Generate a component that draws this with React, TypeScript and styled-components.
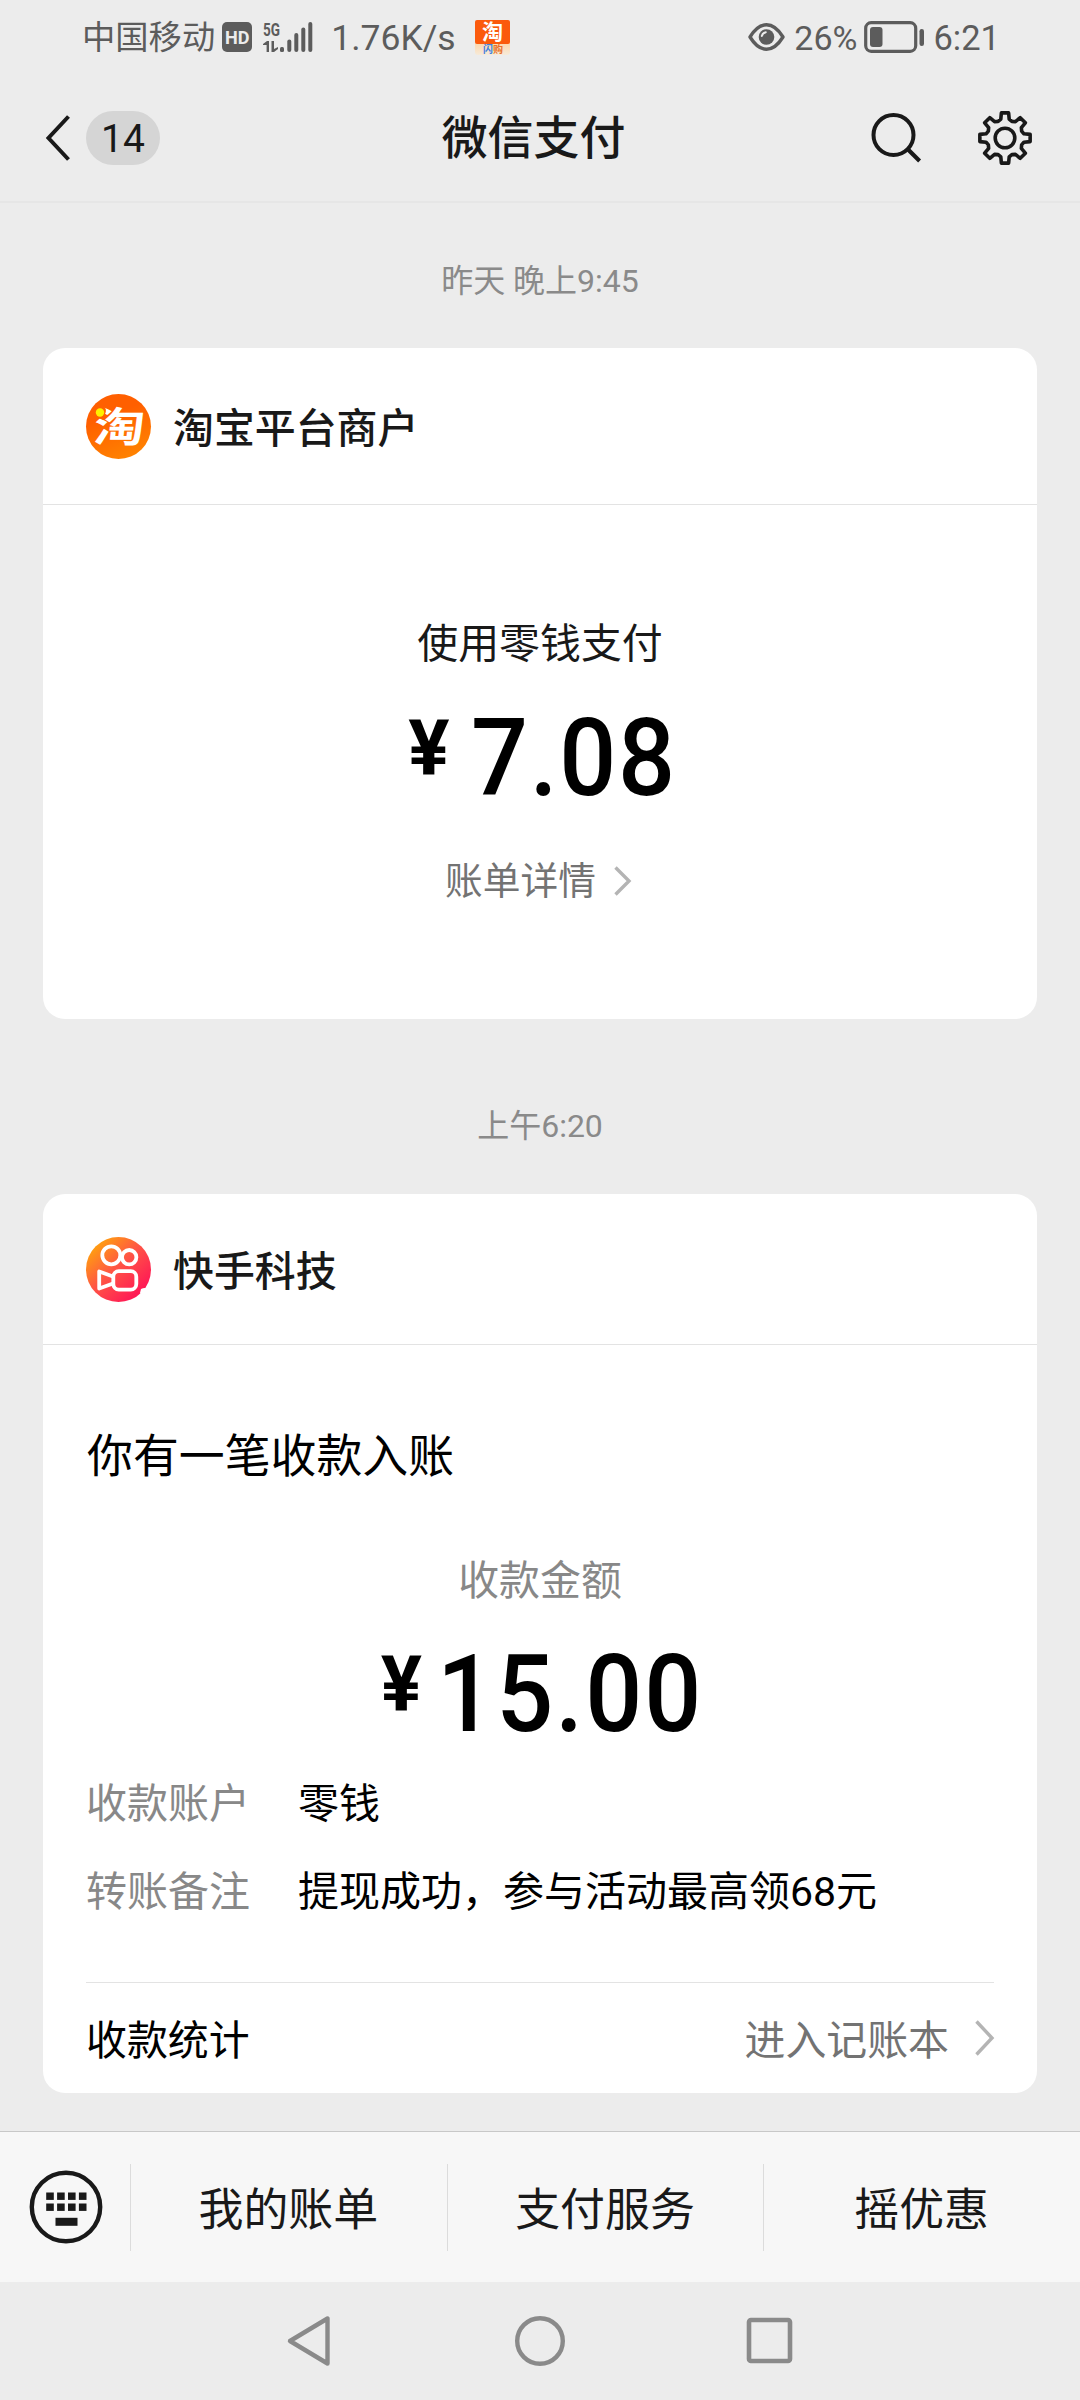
import React from "react";
import styled, { createGlobalStyle } from "styled-components";

const GlobalStyle = createGlobalStyle`
  * { box-sizing: border-box; }
  body {
    margin: 0;
    background: #ececec;
    font-family: Roboto, "Noto Sans CJK SC", sans-serif;
    color: #191919;
  }
  svg { display: block; flex: none; overflow: visible; }
`;

const Screen = styled.div`
  width: 1080px;
  height: 2400px;
  display: flex;
  flex-direction: column;
  background: #ececec;
  overflow: hidden;
`;

const StatusBar = styled.div`
  height: 74px;
  flex: none;
  display: flex;
  justify-content: space-between;
  padding: 0 80px 0 82px;
  color: #5c5c5c;
`;

const StatusGroup = styled.div`
  display: flex;
  align-items: center;
`;

const StatusText = styled.span<{ $size: number; $left?: number }>`
  font-size: ${(p) => p.$size}px;
  line-height: 74px;
  padding-top: 1px;
  margin-left: ${(p) => p.$left ?? 0}px;
  white-space: nowrap;
`;

const StatusIcon = styled.svg<{ $left: number }>`
  margin-left: ${(p) => p.$left}px;
`;

const TitleBar = styled.header`
  height: 129px;
  flex: none;
  display: grid;
  grid-template-columns: 1fr auto 1fr;
  align-items: center;
  padding: 0 47px 0 44px;
  border-bottom: 2px solid #e6e6e6;
`;

const BackArea = styled.div`
  display: flex;
  align-items: center;
  gap: 15px;
`;

const UnreadBadge = styled.span`
  width: 74px;
  height: 54px;
  border-radius: 27px;
  background: #d5d5d5;
  font-size: 39px;
  line-height: 57px;
  text-align: center;
`;

const Title = styled.h1`
  margin: 0;
  padding: 1px 10px 0 0;
  font-size: 45.9px;
  line-height: 60px;
  font-weight: 500;
`;

const TitleActions = styled.div`
  display: flex;
  align-items: center;
  justify-content: flex-end;
  gap: 56px;
`;

const Feed = styled.main`
  flex: 1;
  min-height: 0;
  display: flex;
  flex-direction: column;
  padding: 0 43px;
`;

const TimeLabel = styled.div<{ $height: number; $top: number }>`
  height: ${(p) => p.$height}px;
  padding-top: ${(p) => p.$top}px;
  flex: none;
  text-align: center;
  font-size: 32px;
  line-height: 40px;
  color: #8a8a8a;
`;

const Card = styled.section<{ $height: number }>`
  height: ${(p) => p.$height}px;
  flex: none;
  display: flex;
  flex-direction: column;
  border-radius: 22px;
  background: #fff;
`;

const CardHeader = styled.div<{ $height: number }>`
  height: ${(p) => p.$height}px;
  flex: none;
  display: flex;
  align-items: center;
  gap: 22px;
  padding-left: 43px;
  border-bottom: 1px solid #e3e3e3;
`;

const Merchant = styled.h2`
  margin: 0;
  padding-top: 5px;
  font-size: 40.9px;
  line-height: 60px;
  font-weight: 500;
`;

const PaymentBody = styled.div`
  display: flex;
  flex-direction: column;
  align-items: center;
  padding-top: 109px;
`;

const Caption = styled.div<{ $muted?: boolean }>`
  font-size: 40.9px;
  line-height: 60px;
  text-align: center;
  color: ${(p) => (p.$muted ? "#888" : "#191919")};
`;

const AmountRow = styled.div`
  display: flex;
  justify-content: center;
  height: 110px;
  color: #000;
`;

const Yen = styled.span`
  font-size: 77px;
  line-height: 95px;
  font-weight: 700;
  width: 44px;
`;

const Figure = styled.span<{ $gap: number; $trim: number; $spacing: number }>`
  font-size: 108px;
  line-height: 112px;
  font-weight: 500;
  letter-spacing: ${(p) => p.$spacing}px;
  margin-left: ${(p) => p.$gap}px;
  margin-right: -${(p) => p.$trim}px;
  transform: scaleX(0.93);
  transform-origin: left center;
`;

const DetailLink = styled.div`
  display: flex;
  align-items: center;
  gap: 18px;
  padding-right: 4px;
  font-size: 37.7px;
  line-height: 50px;
  color: #737373;
`;

const ReceiptBody = styled.div`
  flex: 1;
  display: flex;
  flex-direction: column;
  padding: 80px 43px 0;
`;

const Headline = styled.div`
  padding-left: 1px;
  font-size: 45.9px;
  line-height: 62px;
  color: #000;
`;

const Fields = styled.dl`
  margin: 0;
  display: grid;
  grid-template-columns: 212px 1fr;
  row-gap: 28px;
  font-size: 41px;
  line-height: 60px;
`;

const FieldName = styled.dt`
  color: #888;
`;

const FieldValue = styled.dd`
  margin: 0;
  color: #000;
  white-space: nowrap;
`;

const CardFooter = styled.div`
  height: 111px;
  margin-top: auto;
  display: flex;
  align-items: center;
  justify-content: space-between;
  border-top: 1px solid #e3e3e3;
  font-size: 40.9px;
  line-height: 60px;
  color: #000;
`;

const FooterText = styled.span`
  padding-top: 6px;
`;

const FooterLink = styled.div`
  display: flex;
  align-items: center;
  gap: 26px;
  color: #737373;
`;

const MenuBar = styled.nav`
  height: 151px;
  flex: none;
  display: flex;
  align-items: center;
  background: #f7f7f7;
  border-top: 1px solid #c8c8c8;
`;

const KeyboardCell = styled.div`
  width: 130px;
  flex: none;
  padding-left: 28.5px;
`;

const MenuItem = styled.div`
  flex: 1;
  height: 87px;
  padding-right: 1px;
  border-left: 1px solid #dcdcdc;
  text-align: center;
  font-size: 44.9px;
  line-height: 94px;
`;

const SystemNav = styled.div`
  height: 118px;
  flex: none;
  display: flex;
  align-items: center;
  justify-content: center;
  gap: 181.5px;
  padding: 0 3px 0 4px;
`;

const Gap = styled.div<{ $h: number }>`
  height: ${(p) => p.$h}px;
  flex: none;
`;

function Chevron({ w, h }: { w: number; h: number }) {
  return (
    <svg width={w} height={h} viewBox={`0 0 ${w} ${h}`}>
      <path
        d={`M1.5 1.5 L${w - 2} ${h / 2} L1.5 ${h - 1.5}`}
        fill="none"
        stroke="#b4b4b4"
        strokeWidth="3.4"
      />
    </svg>
  );
}

function gearPath() {
  const pts: string[] = [];
  const ring: [number, number][] = [
    [-22.5, 18],
    [-12.5, 19.4],
    [-8.2, 25.4],
    [8.2, 25.4],
    [12.5, 19.4],
  ];
  for (let i = 0; i < 8; i++) {
    for (const [a, r] of ring) {
      const t = ((i * 45 + a) * Math.PI) / 180;
      pts.push(`${(28 + r * Math.sin(t)).toFixed(2)} ${(28 - r * Math.cos(t)).toFixed(2)}`);
    }
  }
  return `M${pts.join("L")}Z`;
}

function TaobaoLogo() {
  return (
    <svg width="65" height="65" viewBox="0 0 65 65">
      <defs>
        <linearGradient id="tb" x1="0.3" y1="0" x2="0.7" y2="1">
          <stop offset="0.3" stopColor="#ff5f00" />
          <stop offset="1" stopColor="#ff8400" />
        </linearGradient>
      </defs>
      <circle cx="32.5" cy="32.5" r="32.5" fill="url(#tb)" />
      <text
        x="0"
        y="0"
        transform="translate(6.5 48) skewX(-6) scale(1.1 0.9)"
        fontFamily="Noto Sans CJK SC, sans-serif"
        fontWeight="700"
        fontSize="46"
        fill="#fff"
      >
        淘
      </text>
      <circle cx="13.5" cy="17" r="6.4" fill="#ff6000" />
      <circle cx="14" cy="18.5" r="4.2" fill="#fff000" />
    </svg>
  );
}

function KuaishouLogo() {
  return (
    <svg width="65" height="65" viewBox="0 0 65 65">
      <defs>
        <linearGradient id="ks" x1="0.05" y1="0.15" x2="0.75" y2="0.9">
          <stop offset="0" stopColor="#ffa60a" />
          <stop offset="0.5" stopColor="#ff5545" />
          <stop offset="1" stopColor="#ff1b55" />
        </linearGradient>
      </defs>
      <circle cx="32.5" cy="32.5" r="32.5" fill="url(#ks)" />
      <g fill="none" stroke="#fff" strokeWidth="3.8" strokeLinejoin="round">
        <circle cx="25.3" cy="18.3" r="9" />
        <circle cx="43.2" cy="20.2" r="7.2" />
        <rect x="27.3" y="34.2" width="23" height="18.4" rx="5.5" />
        <path d="M27 39.5 L13.2 34.5 V51.5 L27 46.5" />
      </g>
      <path d="M55 52 Q59 50 62 52 L58.5 57 Q55 58 54 56Z" fill="#fff" />
    </svg>
  );
}

interface AmountProps {
  value: string;
  gap: number;
  trim: number;
  spacing: number;
}

function Amount({ value, gap, trim, spacing }: AmountProps) {
  return (
    <AmountRow>
      <Yen>¥</Yen>
      <Figure $gap={gap} $trim={trim} $spacing={spacing}>
        {value}
      </Figure>
    </AmountRow>
  );
}

export default function App() {
  return (
    <>
      <GlobalStyle />
      <Screen>
        <StatusBar>
          <StatusGroup>
            <StatusText $size={33.3}>中国移动</StatusText>
            <StatusIcon $left={7} width="30" height="30" viewBox="0 0 30 30">
              <rect width="30" height="30" rx="5" fill="#5c5c5c" />
              <text x="3" y="21.5" fontSize="19" fontWeight="700" textLength="24.5" lengthAdjust="spacingAndGlyphs" fill="#ececec">
                HD
              </text>
            </StatusIcon>
            <StatusIcon $left={11} width="50" height="32" viewBox="0 0 50 32" fill="#5c5c5c">
              <text x="0" y="14.5" fontSize="19" fontWeight="700" textLength="17" lengthAdjust="spacingAndGlyphs">
                5G
              </text>
              <path d="M0 23 L4 20 H6 V31 H3.6 V24 H0Z M8.5 20 H11 V28 L15 26 V28 L11 31 H8.5Z" />
              <rect x="17" y="26" width="4" height="5" rx="1.5" />
              <rect x="24.3" y="18.5" width="4" height="12.5" rx="2" />
              <rect x="31.3" y="12" width="4" height="19" rx="2" />
              <rect x="38.3" y="6.5" width="4" height="24.5" rx="2" />
              <rect x="45.3" y="1" width="4" height="30" rx="2" />
            </StatusIcon>
            <StatusText $size={35.5} $left={18}>1.76K/s</StatusText>
            <StatusIcon $left={19} width="35" height="35" viewBox="0 0 35 35">
              <defs>
                <linearGradient id="sg" x1="0" y1="0" x2="0" y2="1">
                  <stop offset="0" stopColor="#ffcf98" />
                  <stop offset="1" stopColor="#f6ead9" />
                </linearGradient>
              </defs>
              <rect y="18" width="35" height="17" rx="3" fill="url(#sg)" />
              <rect width="35" height="24" rx="2" fill="#fb5a0c" />
              <text x="7" y="19" fontSize="21" fontWeight="700" fontFamily="Noto Sans CJK SC, sans-serif" fill="#fff">
                淘
              </text>
              <text x="8" y="33" fontSize="10" fontWeight="700" fontFamily="Noto Sans CJK SC, sans-serif" fill="#e8702a">
                <tspan fill="#3f7fe0">闪</tspan>购
              </text>
            </StatusIcon>
          </StatusGroup>
          <StatusGroup>
            <StatusIcon $left={0} width="37" height="28" viewBox="0 0 37 28">
              <path
                d="M2 14 Q9.5 1.8 18.5 1.8 Q27.5 1.8 35 14 Q27.5 26.2 18.5 26.2 Q9.5 26.2 2 14Z"
                fill="none"
                stroke="#5c5c5c"
                strokeWidth="3.4"
                strokeLinejoin="round"
              />
              <circle cx="18.5" cy="14" r="7.8" fill="#5c5c5c" />
              <path d="M13.8 13 A5 5 0 0 1 17.8 9.2" fill="none" stroke="#ececec" strokeWidth="2" strokeLinecap="round" />
            </StatusIcon>
            <StatusText $size={34} $left={9}>26%</StatusText>
            <StatusIcon $left={7} width="61" height="32" viewBox="0 0 61 32">
              <rect x="1.7" y="1.7" width="50" height="28.6" rx="5.5" fill="none" stroke="#5c5c5c" strokeWidth="3.2" />
              <rect x="6" y="6" width="12.5" height="20" rx="3" fill="#5c5c5c" />
              <rect x="55.5" y="8" width="4.5" height="17" rx="2.2" fill="#5c5c5c" />
            </StatusIcon>
            <StatusText $size={34.5} $left={8}>6:21</StatusText>
          </StatusGroup>
        </StatusBar>

        <TitleBar>
          <BackArea>
            <svg width="27" height="46" viewBox="0 0 27 46">
              <path d="M24.5 1.5 L4.5 23 L24.5 44.5" fill="none" stroke="#191919" strokeWidth="4" />
            </svg>
            <UnreadBadge>14</UnreadBadge>
          </BackArea>
          <Title>微信支付</Title>
          <TitleActions>
            <svg width="50" height="50" viewBox="0 0 50 50">
              <circle cx="22.5" cy="22" r="20" fill="none" stroke="#191919" strokeWidth="4" />
              <path d="M36.8 36.3 L48.6 48" stroke="#191919" strokeWidth="4.2" />
            </svg>
            <svg width="56" height="56" viewBox="0 0 56 56" fill="none" stroke="#191919" strokeWidth="3.6" strokeLinejoin="round">
              <path d={gearPath()} />
              <circle cx="28" cy="28" r="9.8" />
            </svg>
          </TitleActions>
        </TitleBar>

        <Feed>
          <TimeLabel $height={145} $top={58}>昨天 晚上9:45</TimeLabel>
          <Card $height={671}>
            <CardHeader $height={157}>
              <TaobaoLogo />
              <Merchant>淘宝平台商户</Merchant>
            </CardHeader>
            <PaymentBody>
              <Caption>使用零钱支付</Caption>
              <Gap $h={28} />
              <Amount value="7.08" gap={19} trim={21} spacing={1.8} />
              <Gap $h={44} />
              <DetailLink>
                账单详情
                <Chevron w={17} h={30} />
              </DetailLink>
            </PaymentBody>
          </Card>
          <TimeLabel $height={175} $top={87}>上午6:20</TimeLabel>
          <Card $height={899}>
            <CardHeader $height={151}>
              <KuaishouLogo />
              <Merchant>快手科技</Merchant>
            </CardHeader>
            <ReceiptBody>
              <Headline>你有一笔收款入账</Headline>
              <Gap $h={64} />
              <Caption $muted>收款金额</Caption>
              <Gap $h={27} />
              <Amount value="15.00" gap={12} trim={24} spacing={2.2} />
              <Gap $h={26} />
              <Fields>
                <FieldName>收款账户</FieldName>
                <FieldValue>零钱</FieldValue>
                <FieldName>转账备注</FieldName>
                <FieldValue>提现成功，参与活动最高领68元</FieldValue>
              </Fields>
              <CardFooter>
                <FooterText>收款统计</FooterText>
                <FooterLink>
                  <FooterText>进入记账本</FooterText>
                  <Chevron w={19} h={36} />
                </FooterLink>
              </CardFooter>
            </ReceiptBody>
          </Card>
        </Feed>

        <MenuBar>
          <KeyboardCell>
            <svg width="74" height="74" viewBox="0 0 74 74" fill="#191919">
              <circle cx="37" cy="37" r="34.2" fill="none" stroke="#191919" strokeWidth="4.4" />
              {[22.5, 33.5].map((y) =>
                [17.2, 28.1, 39, 49.9].map((x) => <rect key={`${x}-${y}`} x={x} y={y} width="7.6" height="7.4" />)
              )}
              <rect x="26.5" y="47.8" width="22" height="8" />
            </svg>
          </KeyboardCell>
          <MenuItem>我的账单</MenuItem>
          <MenuItem>支付服务</MenuItem>
          <MenuItem>摇优惠</MenuItem>
        </MenuBar>

        <SystemNav>
          <svg width="44" height="52" viewBox="0 0 44 52">
            <path d="M40.5 3.5 V48.5 L3 26Z" fill="none" stroke="#8a8a8a" strokeWidth="4.4" strokeLinejoin="round" />
          </svg>
          <svg width="52" height="52" viewBox="0 0 52 52">
            <circle cx="27" cy="26" r="22.8" fill="none" stroke="#8a8a8a" strokeWidth="4.4" />
          </svg>
          <svg width="48" height="48" viewBox="0 0 48 48">
            <rect x="3" y="3" width="41" height="41" rx="2" fill="none" stroke="#8a8a8a" strokeWidth="4.6" />
          </svg>
        </SystemNav>
      </Screen>
    </>
  );
}
